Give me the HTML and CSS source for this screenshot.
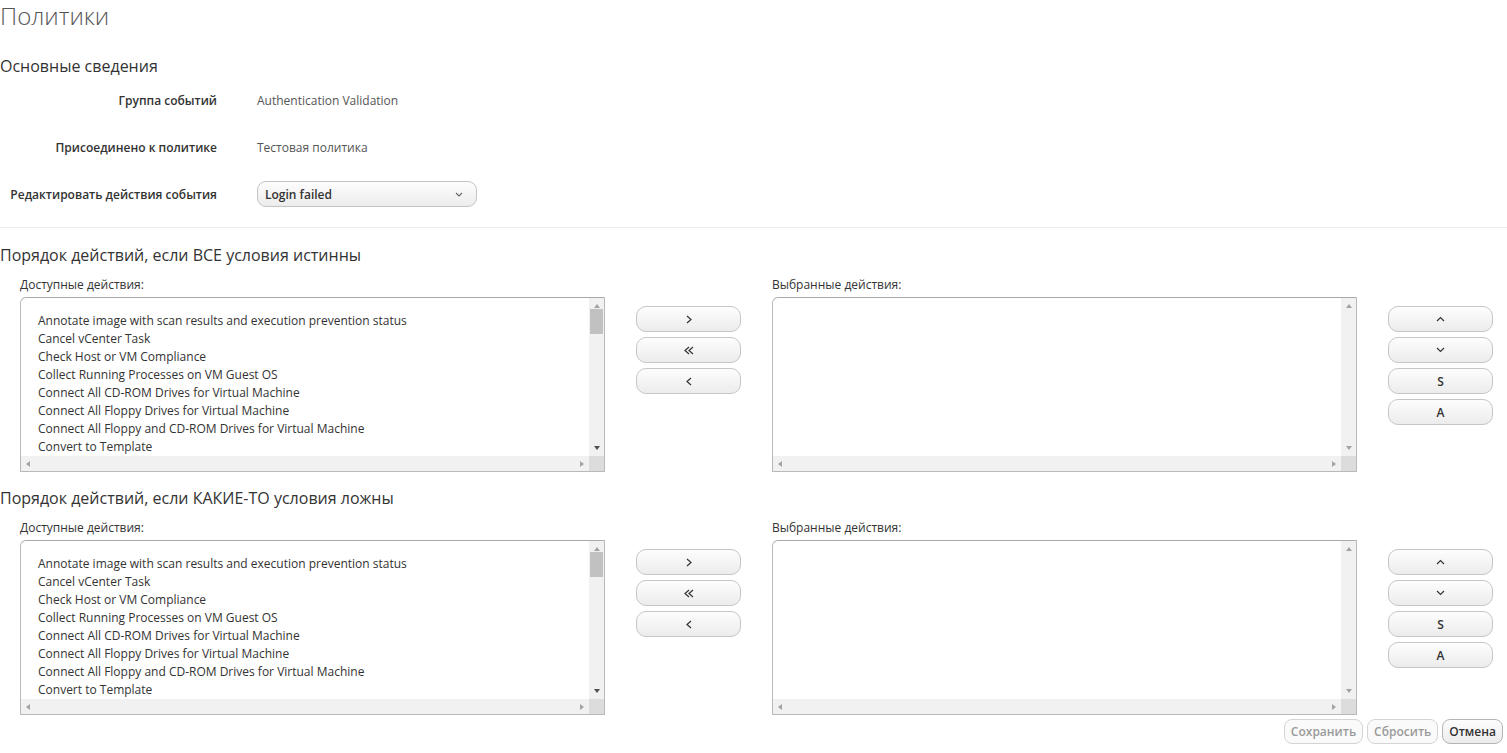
FILE: index.html
```html
<!DOCTYPE html>
<html lang="ru">
<head>
    <meta charset="UTF-8">
    <title>Политики</title>
    <link rel="stylesheet" href="styles.css">
</head>
<body>
    <div class="page">
        <h1 class="page-title">Политики</h1>

        <h2 class="section-title">Основные сведения</h2>
        <div class="form">
            <div class="form-row">
                <span class="form-label">Группа событий</span>
                <span class="form-value">Authentication Validation</span>
            </div>
            <div class="form-row">
                <span class="form-label">Присоединено к политике</span>
                <span class="form-value">Тестовая политика</span>
            </div>
            <div class="form-row">
                <span class="form-label">Редактировать действия события</span>
                <div class="select">
                    <span>Login failed</span>
                    <svg width="8" height="5" viewBox="0 0 8 5"><polyline points="1,1 4,4 7,1" fill="none" stroke="#666" stroke-width="1.1"/></svg>
                </div>
            </div>
        </div>

        <div class="divider"></div>

        <!-- Все условия истинны -->
        <div class="actions">
            <h2 class="section-title">Порядок действий, если ВСЕ условия истинны</h2>
            <div class="dual-list">
                <div class="list-col">
                    <div class="list-label">Доступные действия:</div>
                    <div class="listbox">
                        <ul class="list-items">
                            <li>Annotate image with scan results and execution prevention status</li>
                            <li>Cancel vCenter Task</li>
                            <li>Check Host or VM Compliance</li>
                            <li>Collect Running Processes on VM Guest OS</li>
                            <li>Connect All CD-ROM Drives for Virtual Machine</li>
                            <li>Connect All Floppy Drives for Virtual Machine</li>
                            <li>Connect All Floppy and CD-ROM Drives for Virtual Machine</li>
                            <li>Convert to Template</li>
                        </ul>
                        <div class="vscroll">
                            <span class="arrow up"></span>
                            <span class="thumb"></span>
                            <span class="arrow down active"></span>
                        </div>
                        <div class="hscroll">
                            <span class="arrow left"></span>
                            <span class="arrow right"></span>
                        </div>
                        <div class="corner"></div>
                    </div>
                </div>
                <div class="btn-col">
                    <button class="btn"><svg width="6" height="9" viewBox="0 0 6 9"><polyline points="1,1 5,4.5 1,8" fill="none" stroke="#333" stroke-width="1.2"/></svg></button>
                    <button class="btn"><svg width="10" height="9" viewBox="0 0 10 9"><polyline points="5,1 1,4.5 5,8" fill="none" stroke="#333" stroke-width="1.2"/><polyline points="9,1 5,4.5 9,8" fill="none" stroke="#333" stroke-width="1.2"/></svg></button>
                    <button class="btn"><svg width="6" height="9" viewBox="0 0 6 9"><polyline points="5,1 1,4.5 5,8" fill="none" stroke="#333" stroke-width="1.2"/></svg></button>
                </div>
                <div class="list-col">
                    <div class="list-label">Выбранные действия:</div>
                    <div class="listbox">
                        <ul class="list-items"></ul>
                        <div class="vscroll">
                            <span class="arrow up"></span>
                            <span class="arrow down"></span>
                        </div>
                        <div class="hscroll">
                            <span class="arrow left"></span>
                            <span class="arrow right"></span>
                        </div>
                        <div class="corner"></div>
                    </div>
                </div>
                <div class="btn-col">
                    <button class="btn"><svg width="9" height="6" viewBox="0 0 9 6"><polyline points="1,5 4.5,1.5 8,5" fill="none" stroke="#333" stroke-width="1.2"/></svg></button>
                    <button class="btn"><svg width="9" height="6" viewBox="0 0 9 6"><polyline points="1,1 4.5,4.5 8,1" fill="none" stroke="#333" stroke-width="1.2"/></svg></button>
                    <button class="btn">S</button>
                    <button class="btn">A</button>
                </div>
            </div>
        </div>

        <!-- Какие-то условия ложны -->
        <div class="actions">
            <h2 class="section-title">Порядок действий, если КАКИЕ-ТО условия ложны</h2>
            <div class="dual-list">
                <div class="list-col">
                    <div class="list-label">Доступные действия:</div>
                    <div class="listbox">
                        <ul class="list-items">
                            <li>Annotate image with scan results and execution prevention status</li>
                            <li>Cancel vCenter Task</li>
                            <li>Check Host or VM Compliance</li>
                            <li>Collect Running Processes on VM Guest OS</li>
                            <li>Connect All CD-ROM Drives for Virtual Machine</li>
                            <li>Connect All Floppy Drives for Virtual Machine</li>
                            <li>Connect All Floppy and CD-ROM Drives for Virtual Machine</li>
                            <li>Convert to Template</li>
                        </ul>
                        <div class="vscroll">
                            <span class="arrow up"></span>
                            <span class="thumb"></span>
                            <span class="arrow down active"></span>
                        </div>
                        <div class="hscroll">
                            <span class="arrow left"></span>
                            <span class="arrow right"></span>
                        </div>
                        <div class="corner"></div>
                    </div>
                </div>
                <div class="btn-col">
                    <button class="btn"><svg width="6" height="9" viewBox="0 0 6 9"><polyline points="1,1 5,4.5 1,8" fill="none" stroke="#333" stroke-width="1.2"/></svg></button>
                    <button class="btn"><svg width="10" height="9" viewBox="0 0 10 9"><polyline points="5,1 1,4.5 5,8" fill="none" stroke="#333" stroke-width="1.2"/><polyline points="9,1 5,4.5 9,8" fill="none" stroke="#333" stroke-width="1.2"/></svg></button>
                    <button class="btn"><svg width="6" height="9" viewBox="0 0 6 9"><polyline points="5,1 1,4.5 5,8" fill="none" stroke="#333" stroke-width="1.2"/></svg></button>
                </div>
                <div class="list-col">
                    <div class="list-label">Выбранные действия:</div>
                    <div class="listbox">
                        <ul class="list-items"></ul>
                        <div class="vscroll">
                            <span class="arrow up"></span>
                            <span class="arrow down"></span>
                        </div>
                        <div class="hscroll">
                            <span class="arrow left"></span>
                            <span class="arrow right"></span>
                        </div>
                        <div class="corner"></div>
                    </div>
                </div>
                <div class="btn-col">
                    <button class="btn"><svg width="9" height="6" viewBox="0 0 9 6"><polyline points="1,5 4.5,1.5 8,5" fill="none" stroke="#333" stroke-width="1.2"/></svg></button>
                    <button class="btn"><svg width="9" height="6" viewBox="0 0 9 6"><polyline points="1,1 4.5,4.5 8,1" fill="none" stroke="#333" stroke-width="1.2"/></svg></button>
                    <button class="btn">S</button>
                    <button class="btn">A</button>
                </div>
            </div>
        </div>

        <div class="footer">
            <button class="footer-btn" disabled>Сохранить</button>
            <button class="footer-btn" disabled>Сбросить</button>
            <button class="footer-btn">Отмена</button>
        </div>
    </div>
</body>
</html>
```

FILE: styles.css
```css
body {
    margin: 0;
    padding: 0;
    font-family: 'Open Sans', 'DejaVu Sans', sans-serif;
    color: #333;
    background-color: #fff;
}

.page {
    width: 1507px;
}

.page-title {
    margin: 0;
    font-size: 24px;
    line-height: 32px;
    font-weight: 300;
    color: #565656;
}

.section-title {
    margin: 0;
    font-size: 16px;
    line-height: 22px;
    font-weight: 400;
    color: #333;
}

.page-title + .section-title {
    margin-top: 23px;
}

/* Основные сведения */
.form {
    margin-top: 10px;
    display: flex;
    flex-direction: column;
    gap: 21px;
}

.form-row {
    display: flex;
    align-items: center;
    gap: 40px;
    height: 26px;
}

.form-label {
    width: 217px;
    text-align: right;
    font-size: 12px;
    font-weight: 600;
    color: #333;
}

.form-value {
    font-size: 12px;
    color: #555;
}

.select {
    box-sizing: border-box;
    width: 220px;
    height: 26px;
    padding: 0 13px 0 7px;
    border: 1px solid #c4c4c4;
    border-radius: 9px;
    background: linear-gradient(#fdfdfd, #ececec);
    display: flex;
    align-items: center;
    justify-content: space-between;
    font-size: 12px;
    font-weight: 600;
    color: #333;
}

.divider {
    margin-top: 20px;
    height: 1px;
    background-color: #ebebeb;
}

/* Списки действий */
.actions {
    margin-top: 16px;
}

.actions + .actions {
    margin-top: 15px;
}

.dual-list {
    margin-top: 11px;
    padding-left: 20px;
    display: flex;
    gap: 31px;
}

.list-col {
    width: 585px;
}

.list-label {
    font-size: 12px;
    line-height: 15px;
    color: #333;
    margin-bottom: 5px;
}

.listbox {
    box-sizing: border-box;
    height: 175px;
    border: 1px solid #b9b9b9;
    border-top-color: #a9a9a9;
    border-radius: 6px 0 0 0;
    display: grid;
    grid-template-columns: 1fr 15px;
    grid-template-rows: 1fr 15px;
    overflow: hidden;
}

.list-items {
    list-style-type: none;
    margin: 0;
    padding: 14px 0 0 17px;
    overflow: hidden;
    font-size: 12px;
    line-height: 18px;
    color: #333;
    white-space: nowrap;
}

.vscroll {
    background-color: #f1f1f1;
    display: flex;
    flex-direction: column;
    align-items: center;
}

.vscroll .thumb {
    width: 13px;
    height: 25px;
    background-color: #c1c1c1;
    margin-top: 1px;
}

.vscroll .down {
    margin-top: auto;
}

.hscroll {
    background-color: #f1f1f1;
    display: flex;
    align-items: center;
    justify-content: space-between;
    padding: 0 5px;
}

.corner {
    background-color: #dcdcdc;
}

.arrow {
    width: 0;
    height: 0;
    border-style: solid;
    border-color: transparent;
}

.arrow.up {
    margin-top: 6px;
    border-width: 0 3.5px 4px 3.5px;
    border-bottom-color: #a3a3a3;
}

.arrow.down {
    margin-bottom: 6px;
    border-width: 4px 3.5px 0 3.5px;
    border-top-color: #a3a3a3;
}

.arrow.down.active {
    border-top-color: #505050;
}

.arrow.left {
    border-width: 3.5px 4px 3.5px 0;
    border-right-color: #a3a3a3;
}

.arrow.right {
    border-width: 3.5px 0 3.5px 4px;
    border-left-color: #a3a3a3;
}

.btn-col {
    margin-top: 29px;
    width: 105px;
    display: flex;
    flex-direction: column;
    gap: 5px;
}

.btn {
    height: 26px;
    padding: 0;
    border: 1px solid #c6c6c6;
    border-radius: 10px;
    background: linear-gradient(#fdfdfd, #ececec);
    font-family: 'Open Sans', sans-serif;
    font-size: 12px;
    font-weight: 600;
    color: #333;
    display: flex;
    align-items: center;
    justify-content: center;
}

/* Кнопки внизу */
.footer {
    margin-top: 4px;
    padding-right: 4px;
    display: flex;
    justify-content: flex-end;
    gap: 4px;
}

.footer-btn {
    height: 25px;
    padding: 0 6px;
    border: 1px solid #b5b5b5;
    border-radius: 8px;
    background: linear-gradient(#fdfdfd, #ececec);
    font-family: 'Open Sans', sans-serif;
    font-size: 12px;
    font-weight: 600;
    color: #333;
}

.footer-btn:disabled {
    color: #9a9a9a;
    border-color: #d4d4d4;
    background: #fafafa;
}
```
